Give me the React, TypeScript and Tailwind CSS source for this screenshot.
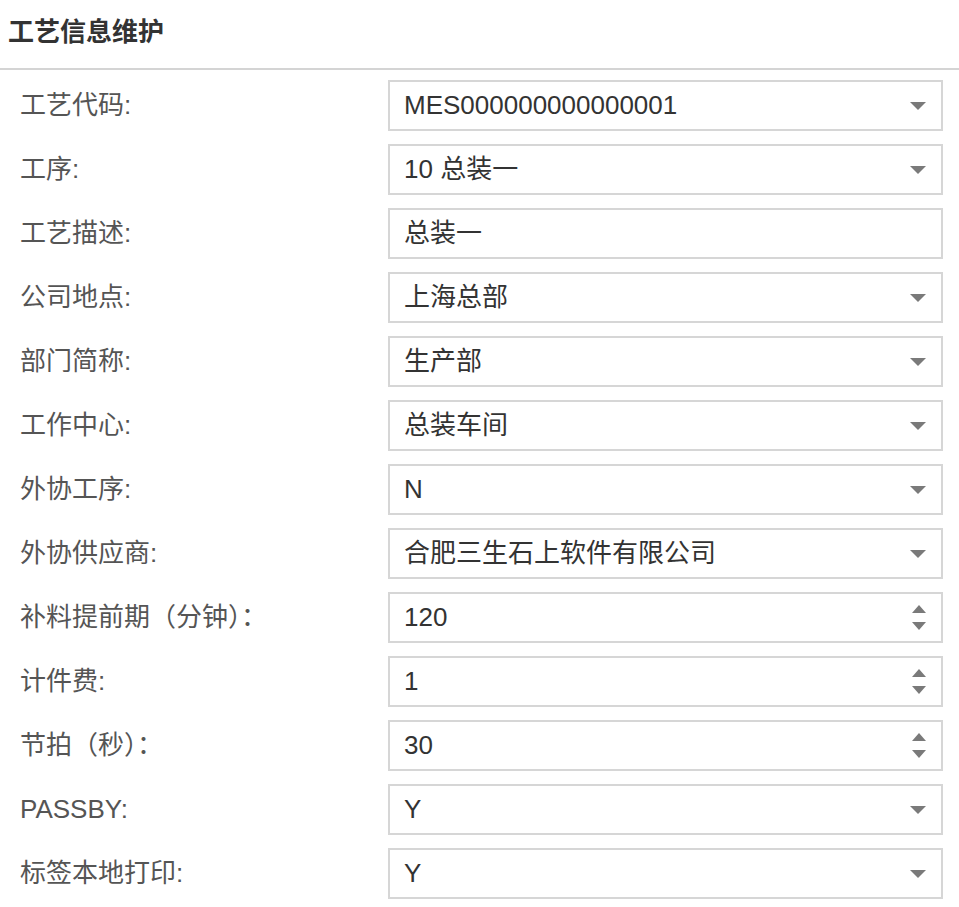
import React from "react";

type Kind = "select" | "text" | "number";

interface Field {
  label: string;
  value: string;
  kind: Kind;
}

const fields: Field[] = [
  { label: "工艺代码:", value: "MES000000000000001", kind: "select" },
  { label: "工序:", value: "10 总装一", kind: "select" },
  { label: "工艺描述:", value: "总装一", kind: "text" },
  { label: "公司地点:", value: "上海总部", kind: "select" },
  { label: "部门简称:", value: "生产部", kind: "select" },
  { label: "工作中心:", value: "总装车间", kind: "select" },
  { label: "外协工序:", value: "N", kind: "select" },
  { label: "外协供应商:", value: "合肥三生石上软件有限公司", kind: "select" },
  { label: "补料提前期（分钟）：", value: "120", kind: "number" },
  { label: "计件费:", value: "1", kind: "number" },
  { label: "节拍（秒）：", value: "30", kind: "number" },
  { label: "PASSBY:", value: "Y", kind: "select" },
  { label: "标签本地打印:", value: "Y", kind: "select" },
];

const Caret = () => (
  <svg width="18" height="10" viewBox="0 0 18 10" className="text-[#7a7a7a]">
    <path d="M1 1 H17 L9 9 Z" fill="currentColor" />
  </svg>
);

const Spinner = () => (
  <svg width="16" height="28" viewBox="0 0 16 28" className="text-[#7a7a7a]">
    <path d="M1 9 L8 1 L15 9 Z" fill="currentColor" />
    <path d="M1 18 H15 L8 26 Z" fill="currentColor" />
  </svg>
);

const FieldRow: React.FC<{ field: Field }> = ({ field }) => (
  <div className="flex items-center h-[51px]">
    <div className="w-[388px] pl-5 text-[26px] text-[#555]">{field.label}</div>
    <div className="flex-1 h-full border-2 border-[#d6d6d6] bg-white flex items-center pl-[14px] pr-[14px]">
      <span className="flex-1 text-[26px] text-[#333]">{field.value}</span>
      {field.kind === "select" && <Caret />}
      {field.kind === "number" && <Spinner />}
    </div>
  </div>
);

export default function App() {
  return (
    <div
      className="w-[959px] h-[907px] bg-white overflow-hidden"
      style={{ fontFamily: '"Liberation Sans", "Noto Sans CJK SC", sans-serif' }}
    >
      <div className="h-[68px] flex items-center pl-2 pb-[4px]">
        <h1 className="text-[26px] font-bold text-[#333]">工艺信息维护</h1>
      </div>
      <div className="h-[2px] bg-[#d4d4d4]" />
      <div className="flex flex-col gap-[13px] pt-[10px] pr-4">
        {fields.map((f) => (
          <FieldRow key={f.label} field={f} />
        ))}
      </div>
    </div>
  );
}
